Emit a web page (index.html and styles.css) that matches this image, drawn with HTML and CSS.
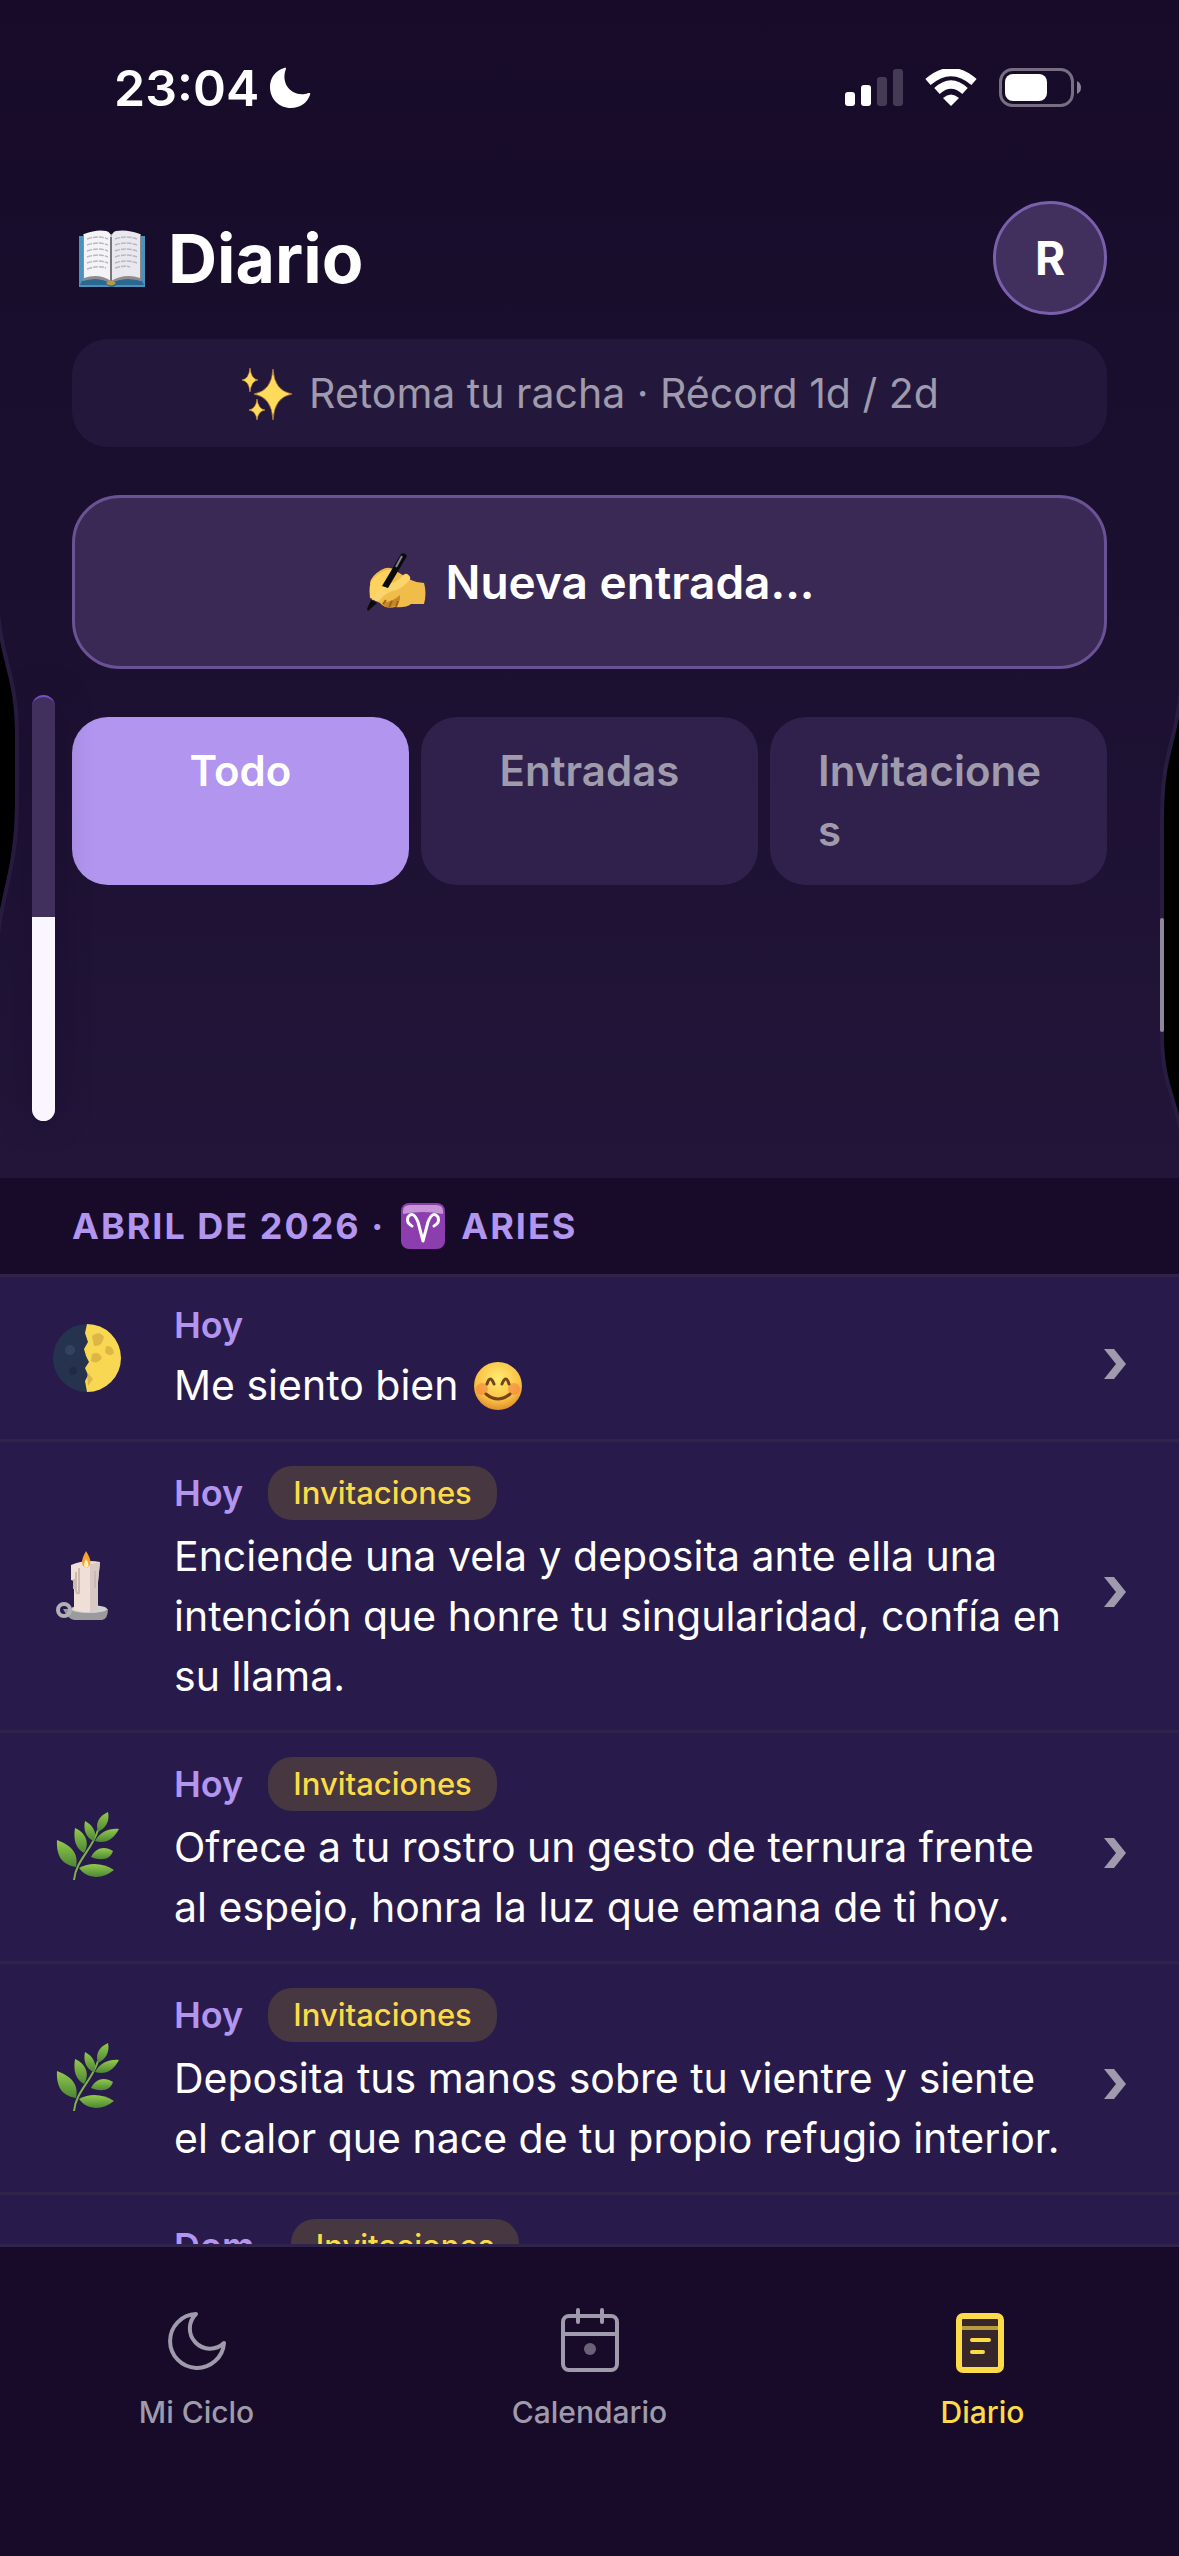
FILE: index.html
```html
<!DOCTYPE html>
<html lang="es">
<head>
    <meta charset="UTF-8">
    <meta name="viewport" content="width=device-width, initial-scale=1.0">
    <title>Diario</title>
    <link rel="stylesheet" href="styles.css">
</head>
<body>

<!-- Iconos compartidos -->
<svg class="defs" width="0" height="0" aria-hidden="true">
    <defs>
        <linearGradient id="leafFill" x1="0" y1="0" x2="0" y2="1">
            <stop offset="0" stop-color="#93cb4c"/>
            <stop offset="1" stop-color="#4c8634"/>
        </linearGradient>
    </defs>
    <symbol id="herb" viewBox="0 0 78 78">
        <path d="M26 72C28 52 44 42 50 22" fill="none" stroke="#7db348" stroke-width="2"/>
        <g fill="url(#leafFill)">
            <path d="M9 32C22 37 31 44 28 59C15 57 8 49 9 32Z"/>
            <path d="M27 20C38 25 42 35 36 45C28 41 25 32 27 20Z"/>
            <path d="M37 13C46 18 49 25 46 33C38 30 35 22 37 13Z"/>
            <path d="M60 4C62 13 58 20 50 24C47 15 51 8 60 4Z"/>
            <path d="M71 21C65 32 57 36 47 33C52 24 61 20 71 21Z"/>
            <path d="M43 49C48 39 57 38 65 43C62 52 53 53 43 49Z"/>
            <path d="M31 60C42 54 55 55 66 62C54 72 39 71 31 60Z"/>
        </g>
    </symbol>
    <symbol id="chevron" viewBox="0 0 30 54">
        <path d="M3 18H13L25 33L13 48H3L15 33Z" fill="#9f9bac"/>
    </symbol>
</svg>

<div class="app">
    <div class="status-bar">
        <div class="status-left">
            <span>23:04</span>
            <svg width="42" height="42" viewBox="0 0 42 42">
                <path d="M15 1C18 0 17 2 16 5C13 17 22 29 36 27C40 26 42 25 41 28C38 36 31 41 22 41C10 41 1 32 1 20C1 11 6 4 15 1Z" fill="#fff"/>
            </svg>
        </div>
        <div class="status-right">
            <svg width="58" height="38" viewBox="0 0 58 38">
                <rect x="0" y="23" width="10" height="14" rx="3" fill="#fff"/>
                <rect x="16" y="16" width="10" height="21" rx="3" fill="#fff"/>
                <rect x="32" y="8" width="10" height="29" rx="3" fill="#463b55"/>
                <rect x="48" y="0" width="10" height="37" rx="3" fill="#463b55"/>
            </svg>
            <svg width="52" height="38" viewBox="0 0 52 38">
                <path d="M3 13Q26-7 49 13" fill="none" stroke="#fff" stroke-width="8"/>
                <path d="M12 22Q26 9 40 22" fill="none" stroke="#fff" stroke-width="8"/>
                <path d="M18 29Q26 22 34 29L26 37Z" fill="#fff"/>
            </svg>
            <svg width="82" height="40" viewBox="0 0 82 40">
                <rect x="1.500" y="1.500" width="72" height="36" rx="12" fill="none" stroke="#786e84" stroke-width="3"/>
                <rect x="6" y="6" width="42" height="27" rx="8" fill="#fff"/>
                <path d="M78 13Q82 15 82 19.500T78 26Z" fill="#8b8296"/>
            </svg>
        </div>
    </div>

    <div class="top">
        <header class="header">
            <h1 class="title">
                <svg width="78" height="60" viewBox="0 0 78 60" role="img" aria-label="Libro">
                    <path d="M7 8H73V59H7Z" fill="#4d92bd"/>
                    <path d="M10 53Q25 48 38 55Q52 48 70 53L72 57H44Q40 61 35 57H8Z" fill="#2c6791"/>
                    <path d="M11 6V53Q26 48 39 55Q53 48 69 53V6Z" fill="#8e8b8c"/>
                    <path d="M12 6Q25 1 34 3Q39 4 39 10V53Q27 45 12 50Z" fill="#f4f3f7"/>
                    <path d="M68 6Q55 1 44 3Q40 4 39 10V53Q53 45 68 50Z" fill="#e9e8ee"/>
                    <path d="M39 9V53" stroke="#77757c" stroke-width="2"/>
                    <path d="M15 11Q27 7 36 11M15 17Q27 13 36 17M15 23Q27 19 36 23M15 29Q27 25 36 29M15 35Q27 31 36 35M15 41Q27 37 34 40M43 11Q54 7 65 11M43 17Q54 13 65 17M43 23Q54 19 65 23M43 29Q54 25 65 29M43 35Q54 31 65 35M43 40Q52 37 58 39" fill="none" stroke="#b9b7bf" stroke-width="1.500" stroke-dasharray="5 1"/>
                    <path d="M34 55Q39 50 44 55Q39 60 34 55Z" fill="#b99a3c"/>
                </svg>
                Diario
            </h1>
            <button class="avatar" type="button">R</button>
        </header>

        <p class="streak">
            <svg width="54" height="54" viewBox="0 0 54 54" aria-hidden="true">
                <g fill="#ffdb5c" stroke="#d99a35" stroke-width=".6">
                    <path d="M33 3Q34 25 52 28Q34 31 33 54Q32 31 14 28Q32 25 33 3Z"/>
                    <path d="M10 2Q11 13 18 14Q11 15 10 26Q9 15 2 14Q9 13 10 2Z"/>
                    <path d="M17 33Q18 43 25 44Q18 45 17 54Q16 45 9 44Q16 43 17 33Z"/>
                </g>
            </svg>
            Retoma tu racha · Récord 1d / 2d
        </p>

        <button class="new-entry" type="button">
            <svg width="66" height="60" viewBox="0 0 66 60" aria-hidden="true">
                <path d="M8 48L6 31Q7 24 17 18Q26 13 32 19L47 28Q53 31 60 31Q63 41 60 52H47Q42 56 31 55Q21 57 16 51L10 48Z" fill="#f0bd4a"/>
                <path d="M6 46Q4 31 10 26Q21 16 29 18L16 38L12 48Z" fill="#ffd25f"/>
                <path d="M18 51Q30 49 36 43Q37 53 28 55Q20 57 18 51Z" fill="#c9872b"/>
                <path d="M13 45Q20 36 32 34Q38 31 42 26" fill="none" stroke="#fbd46c" stroke-width="8" stroke-linecap="round"/>
                <path d="M19 52L22 48M25 55L28 49M32 55L34 49" stroke="#9c641e" stroke-width="2"/>
                <path d="M37 2Q41 0 43 4L24 36L18 34Z" fill="#0a0a0b"/>
                <path d="M7 48L13 51L4 59L3 57Z" fill="#0a0a0b"/>
                <path d="M38 4L32 15" stroke="#85868b" stroke-width="2"/>
            </svg>
            Nueva entrada...
        </button>

        <div class="tabs">
            <button class="tab active" type="button"><span>Todo</span></button>
            <button class="tab" type="button"><span>Entradas</span></button>
            <button class="tab" type="button"><span>Invitaciones</span></button>
        </div>
    </div>

    <main class="journal">
        <h2 class="month">
            ABRIL DE 2026 ·
            <svg width="46" height="48" viewBox="0 0 46 48" role="img" aria-label="Aries">
                <rect x="1" y="1" width="44" height="46" rx="8" fill="#8d3eae"/>
                <path d="M3 12V9Q3 3 10 3H36Q43 3 43 9V12Q23 8 3 12Z" fill="#c795d6"/>
                <path d="M12 24Q6 21 8 15Q13 8 18 20L23 39L28 20Q33 8 38 15Q40 21 34 24" fill="none" stroke="#fff" stroke-width="3" stroke-linecap="round" stroke-linejoin="round"/>
            </svg>
            ARIES
        </h2>

        <ul class="entries">
            <li>
                <a class="entry" href="#">
                    <svg class="entry-icon" viewBox="0 0 78 78" aria-hidden="true">
                        <circle cx="39" cy="39" r="34" fill="#26334e"/>
                        <path d="M39 5A34 34 0 0 1 39 73L37 62L40 56L37 49L41 43L38 37L36 30L40 23L37 14Z" fill="#f8d752"/>
                        <path d="M44 17Q51 11 56 18Q54 28 46 27ZM58 27Q65 26 66 34Q61 39 57 33ZM44 35Q51 32 54 39Q49 46 43 42ZM39 53L45 60L40 67Z" fill="#cfa53f" opacity=".65"/>
                        <circle cx="22" cy="31" r="5" fill="#33435f"/>
                        <circle cx="25" cy="52" r="4" fill="#202a43"/>
                    </svg>
                    <div class="entry-body">
                        <div class="entry-meta"><span class="day">Hoy</span></div>
                        <p class="entry-text">Me siento bien
                            <svg class="smile" width="50" height="50" viewBox="0 0 50 50" role="img" aria-label="sonrisa">
                                <defs>
                                    <radialGradient id="face" cx=".5" cy=".35" r=".65">
                                        <stop offset="0" stop-color="#ffec71"/>
                                        <stop offset=".7" stop-color="#fac044"/>
                                        <stop offset="1" stop-color="#e08e2c"/>
                                    </radialGradient>
                                </defs>
                                <circle cx="25" cy="25" r="24" fill="url(#face)"/>
                                <circle cx="9" cy="28" r="6" fill="#f4753c" opacity=".5"/>
                                <circle cx="41" cy="28" r="6" fill="#f4753c" opacity=".5"/>
                                <path d="M14 23Q17 13 21 23M29 23Q33 13 36 23M13 33Q25 43 37 33" fill="none" stroke="#74441a" stroke-width="3" stroke-linecap="round"/>
                            </svg>
                        </p>
                    </div>
                    <svg class="chevron"><use href="#chevron"/></svg>
                </a>
            </li>
            <li>
                <a class="entry" href="#">
                    <svg class="entry-icon" viewBox="0 0 78 78" aria-hidden="true">
                        <path d="M15 62H60Q60 72 54 73H26Q20 72 15 62Z" fill="#9b9a9d"/>
                        <ellipse cx="41" cy="62" rx="18" ry="4" fill="#d2d0d2"/>
                        <circle cx="16" cy="63" r="6" fill="none" stroke="#b2b1b4" stroke-width="4"/>
                        <path d="M23 18Q37 12 52 15L50 35V63Q38 67 26 63V34L23 33Z" fill="#f0dfd7"/>
                        <path d="M42 17L52 15L50 35V63L42 65Z" fill="#d9c8c5"/>
                        <path d="M26 32V42M31 21V46Q28 48 28 42V25M47 24V41" fill="none" stroke="#cdb9ae" stroke-width="2"/>
                        <path d="M38 4Q47 18 38 21Q30 18 38 4Z" fill="#f4a335"/>
                        <path d="M38 12Q43 19 38 21Q34 19 38 12Z" fill="#fff0b5"/>
                    </svg>
                    <div class="entry-body">
                        <div class="entry-meta"><span class="day">Hoy</span><span class="badge">Invitaciones</span></div>
                        <p class="entry-text">Enciende una vela y deposita ante ella una intención que honre tu singularidad, confía en su llama.</p>
                    </div>
                    <svg class="chevron"><use href="#chevron"/></svg>
                </a>
            </li>
            <li>
                <a class="entry" href="#">
                    <svg class="entry-icon"><use href="#herb"/></svg>
                    <div class="entry-body">
                        <div class="entry-meta"><span class="day">Hoy</span><span class="badge">Invitaciones</span></div>
                        <p class="entry-text">Ofrece a tu rostro un gesto de ternura frente al espejo, honra la luz que emana de ti hoy.</p>
                    </div>
                    <svg class="chevron"><use href="#chevron"/></svg>
                </a>
            </li>
            <li>
                <a class="entry" href="#">
                    <svg class="entry-icon"><use href="#herb"/></svg>
                    <div class="entry-body">
                        <div class="entry-meta"><span class="day">Hoy</span><span class="badge">Invitaciones</span></div>
                        <p class="entry-text">Deposita tus manos sobre tu vientre y siente el calor que nace de tu propio refugio interior.</p>
                    </div>
                    <svg class="chevron"><use href="#chevron"/></svg>
                </a>
            </li>
            <li>
                <a class="entry" href="#">
                    <span class="entry-icon"></span>
                    <div class="entry-body">
                        <div class="entry-meta"><span class="day">Dom.</span><span class="badge">Invitaciones</span></div>
                    </div>
                </a>
            </li>
        </ul>
    </main>

    <nav class="nav">
        <a class="nav-item" href="#">
            <svg width="66" height="66" viewBox="0 0 66 66" fill="none" stroke="currentColor" stroke-width="4" stroke-linejoin="round">
                <path d="M32 7A27 27 0 1 0 60 36A18 18 0 0 1 32 7Z"/>
            </svg>
            Mi Ciclo
        </a>
        <a class="nav-item" href="#">
            <svg width="66" height="66" viewBox="0 0 66 66" fill="none" stroke="currentColor" stroke-width="4" stroke-linecap="round">
                <rect x="6" y="9" width="54" height="54" rx="6"/>
                <path d="M6 27H60M21 3V15M45 3V15"/>
                <circle cx="33" cy="42" r="6" fill="currentColor" stroke="none" opacity=".6"/>
            </svg>
            Calendario
        </a>
        <a class="nav-item active" href="#">
            <svg width="66" height="66" viewBox="0 0 66 66" fill="none" stroke="currentColor" stroke-linecap="round">
                <rect x="9" y="9" width="42" height="54" rx="4" fill="#37262a" stroke-width="6"/>
                <path d="M12 21H48" stroke-width="4" opacity=".65" stroke-linecap="butt"/>
                <path d="M22 33H39M22 45H33" stroke-width="4"/>
            </svg>
            Diario
        </a>
    </nav>
</div>

<!-- Control de volumen y bordes de la pantalla -->
<svg class="edge edge-left" viewBox="0 0 20 440">
    <path d="M-4 30C0 110 17 110 17 180V240C17 320 0 330 -4 400" fill="#000" stroke="#281c40" stroke-width="4"/>
</svg>
<div class="volume"><div class="volume-level"></div></div>
<svg class="edge edge-right" viewBox="0 0 20 500">
    <path d="M24 10C20 100 3 90 3 170V385C3 440 20 450 24 500" fill="#000" stroke="#281c40" stroke-width="4"/>
    <path d="M3 270V380" stroke="#8f879b" stroke-width="4" stroke-linecap="round"/>
</svg>

</body>
</html>
```
FILE: styles.css
```css
* {
    box-sizing: border-box;
}
body {
    margin: 0;
    font-family: Inter, "Liberation Sans", sans-serif;
    font-size: 41px;
    line-height: 60px;
    color: #ffffff;
    background: #170b29;
}
h1, h2, p, ul {
    margin: 0;
    padding: 0;
}
ul {
    list-style: none;
}
a {
    color: inherit;
    text-decoration: none;
}
button {
    font: inherit;
    color: inherit;
    border: none;
    cursor: pointer;
}
svg {
    flex-shrink: 0;
}
.defs {
    position: absolute;
}
.app {
    display: flex;
    flex-direction: column;
    height: 100vh;
    background: linear-gradient(#170b29, #1c1031 25%, #221539 46%, #281a4b);
}

/* Barra de estado */
.status-bar {
    display: flex;
    justify-content: space-between;
    align-items: center;
    padding: 58px 98px 59px 114px;
}
.status-left,
.status-right {
    display: flex;
    align-items: center;
}
.status-left {
    gap: 10px;
    font-size: 50px;
    font-weight: 600;
}
.status-right {
    gap: 22px;
}

/* Cabecera */
.top {
    padding: 24px 72px 0;
}
.header {
    display: flex;
    justify-content: space-between;
    align-items: center;
}
.title {
    display: flex;
    align-items: center;
    gap: 18px;
    font-size: 68px;
    font-weight: 700;
}
.avatar {
    width: 114px;
    height: 114px;
    padding: 0;
    border: 3px solid #7a60ac;
    border-radius: 50%;
    background: #412f5e;
    font-size: 46px;
    font-weight: 700;
}
.streak {
    display: flex;
    justify-content: center;
    align-items: center;
    gap: 15px;
    margin-top: 24px;
    padding: 24px;
    border-radius: 36px;
    background: #23183c;
    color: #9f9bac;
}
.new-entry {
    display: flex;
    justify-content: center;
    align-items: center;
    gap: 15px;
    width: 100%;
    margin-top: 48px;
    padding: 54px;
    border: 3px solid #6a5295;
    border-radius: 48px;
    background: #3a2954;
    font-size: 46px;
    font-weight: 600;
}
.tabs {
    display: flex;
    gap: 12px;
    margin-top: 48px;
}
.tab {
    display: flex;
    flex: 1 1 0;
    justify-content: center;
    align-items: flex-start;
    min-width: 0;
    padding: 24px 48px;
    border-radius: 36px;
    background: #2f214b;
    color: #9f9bac;
    font-size: 42px;
    font-weight: 600;
    text-align: left;
}
.tab span {
    min-width: 0;
    overflow-wrap: anywhere;
}
.tab.active {
    background: #b195ee;
    color: #ffffff;
}

/* Lista de entradas */
.journal {
    flex: 1;
    min-height: 0;
    margin-top: 293px;
    overflow: hidden;
}
.month {
    display: flex;
    align-items: center;
    gap: 15px;
    padding: 24px 72px;
    border-bottom: 3px solid #2f234a;
    background: #170b29;
    color: #b195ee;
    font-size: 36px;
    font-weight: 700;
    line-height: 48px;
    letter-spacing: 2px;
}
.entry {
    display: flex;
    align-items: center;
    padding: 24px 48px;
    border-bottom: 3px solid #2f234a;
    background: #281a4b;
}
.entry-icon {
    flex-shrink: 0;
    width: 78px;
    height: 78px;
    margin-right: 48px;
}
.entry-body {
    flex: 1;
    min-width: 0;
    min-height: 114px;
}
.entry-meta {
    display: flex;
    align-items: center;
    gap: 25px;
    margin-bottom: 6px;
}
.day {
    color: #b195ee;
    font-size: 36px;
    font-weight: 600;
    line-height: 48px;
}
.badge {
    padding: 6px 25px;
    border-radius: 24px;
    background: #473741;
    color: #fbdb48;
    font-size: 31px;
    font-weight: 500;
    line-height: 42px;
}
.smile {
    margin-left: 3px;
    vertical-align: -11px;
}
.chevron {
    width: 30px;
    height: 54px;
    margin-left: 24px;
}

/* Navegación inferior */
.nav {
    display: flex;
    padding: 60px 0 120px;
    border-top: 3px solid #2f234a;
    background: #170b29;
}
.nav-item {
    display: flex;
    flex: 1;
    flex-direction: column;
    align-items: center;
    gap: 15px;
    color: #9f9bac;
    font-size: 30px;
    font-weight: 500;
    line-height: 48px;
}
.nav-item.active {
    color: #fbdb48;
}

/* Superpuestos */
.volume {
    position: absolute;
    top: 695px;
    left: 32px;
    display: flex;
    align-items: flex-end;
    width: 23px;
    height: 426px;
    border-radius: 12px;
    border-top: 2px solid #7950c4;
    background: #412f5e;
    box-shadow: 0 0 36px rgba(20, 8, 35, 0.3);
    overflow: hidden;
}
.volume-level {
    width: 100%;
    height: 48%;
    background: #faf6ff;
}
.edge {
    position: absolute;
    width: 20px;
}
.edge-left {
    top: 558px;
    left: 0;
    height: 440px;
}
.edge-right {
    top: 650px;
    right: 0;
    height: 500px;
}
```
